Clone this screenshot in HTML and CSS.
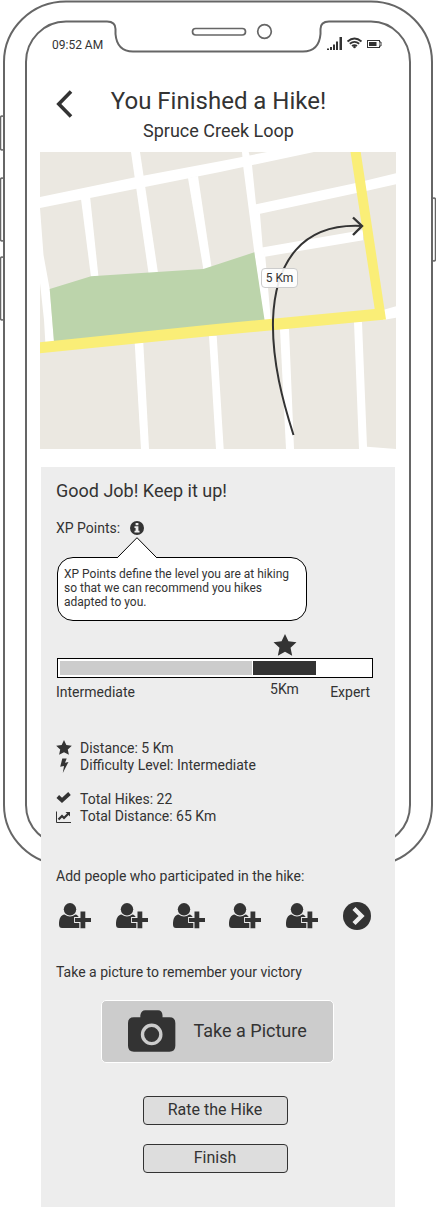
FILE: index.html
```html
<!DOCTYPE html>
<html lang="en">
<head>
<meta charset="utf-8">
<meta name="viewport" content="width=device-width, initial-scale=1">
<title>You Finished a Hike!</title>
<link rel="stylesheet" href="styles.css">
</head>
<body>
<svg class="defs" width="0" height="0" aria-hidden="true">
  <symbol id="star" viewBox="0 0 24 23"><path d="M12 0l3.600 7.700 8.400 1-6.200 5.700 1.700 8.300L12 18.600l-7.500 4.100 1.700-8.300L0 8.700l8.400-1z"/></symbol>
  <symbol id="add-user" viewBox="0 0 32 28">
    <path d="M0 22.500C0 16.500 1.800 12.800 5.500 12.400Q11 16.400 16.500 12.400C19.500 13 20.500 16 20.500 20V26H3Q0 26 0 22.500z"/>
    <circle cx="11" cy="7.300" r="6.200"/>
    <path d="M21.500 9.500h4.800v6.500h5.700v4h-5.700v6.200h-4.800v-6.200h-5.500v-4h5.500z" stroke="#ededed" stroke-width="1.800" paint-order="stroke"/>
  </symbol>
</svg>
<div class="phone">
  <svg class="frame" viewBox="0 0 436 868" preserveAspectRatio="none" aria-hidden="true">
    <g fill="none" stroke="#666" stroke-width="2">
      <path d="M4 118Q4 116 2 116Q0.500 116 0.500 118V148Q0.500 150 2 150Q4 150 4 148M4 180Q4 178 2 178Q0.500 178 0.500 180V239Q0.500 241 2 241Q4 241 4 239M4 259Q4 257 2 257Q0.500 257 0.500 259V318Q0.500 320 2 320Q4 320 4 318M432 200Q432 198 434 198Q435.500 198 435.500 200V259Q435.500 261 434 261Q432 261 432 259" stroke-width="1.500"/>
      <path d="M66 1.500H371A61 60.500 0 0 1 432 62V805A61 60 0 0 1 371 865H66A62 60 0 0 1 4 805V62A62 60.500 0 0 1 66 1.500z"/>
      <path d="M66 21.500H107Q115.500 21.500 115.500 29V34Q117 51.500 133 51.500H303Q319 51.500 320.500 34V29Q320.500 21.500 329 21.500H371A39 40.500 0 0 1 410 62V805A39 40 0 0 1 371 845H66A40 40 0 0 1 26 805V62A40 40.500 0 0 1 66 21.500z"/>
      <rect x="192.500" y="28.500" width="53" height="6.500" rx="3.200" stroke-width="1.700"/>
      <circle cx="264.500" cy="31.500" r="6.800" stroke-width="1.700"/>
    </g>
  </svg>
  <div class="status">
    <span>09:52 AM</span>
    <svg width="56" height="14" viewBox="0 0 56 14" fill="#333" aria-hidden="true">
      <path d="M1 10.500h2v1.500H1zM4 9h2v3H4zM7 6.500h2V12H7zM10 3.500h2V12h-2zM13.500-1h2.500v13h-2.500z"/>
      <g fill="none" stroke="#333" stroke-width="1.800"><path d="M21.500 3.500Q28.500-2.500 35.500 3.500M23.800 5.800Q28.500 2 33.200 5.800M26 8Q28.500 6.200 31 8"/></g><circle cx="28.500" cy="9" r="1.300"/>
      <rect x="41.500" y="2.500" width="12" height="7" fill="none" stroke="#333"/><path d="M43 4h7.500v4H43z"/><path d="M53.500 4h1.500v4h-1.500" fill="#fff" stroke="#333"/>
    </svg>
  </div>
  <header class="header">
    <button class="back" type="button" aria-label="Back"><svg width="18" height="28" viewBox="0 0 18 28" fill="none" stroke="#333" stroke-width="3.600"><path d="M15 1.500L2.800 14 15 26.500"/></svg></button>
    <div class="heading"><h1>You Finished a Hike!</h1><p>Spruce Creek Loop</p></div>
  </header>
  <section class="map" aria-label="Route map">
    <svg viewBox="0 0 356 297" aria-hidden="true">
      <path fill="#ebe8e1" d="M0 0H356V297H0z"/>
      <g fill="#fff">
        <path d="M0 45L94 25.500 103 23.700 180 9.300 227 0H274L180 20 0 56z"/>
        <path d="M91 0H100L118 121H108.500z"/>
        <path d="M41 47L50 44 58.500 125H51z"/>
        <path d="M148 26L158 24 171.500 115 163.500 118z"/>
        <path d="M0 56L3.500 103 9.700 137 14 190H5.300L4 168 0 131z"/>
        <path d="M202 0H208.700L212 13 216 52.300 220 62 222.700 95.300 225.300 104.700 231 170H224L214.300 100.300 203.300 15.300z"/>
        <path d="M215 52.500L314.700 31.300 356 21.300V32.300L326 39 219 62z"/>
        <path d="M222 95.500L323 78V88.300L225 104.700z"/>
        <path d="M343 158L356 154.300V165.700L343 168z"/>
        <path d="M94.700 191H103.300L109 297H101z"/>
        <path d="M169 184H176.700L183.700 297H176z"/>
        <path d="M240 177H249L254 297H246z"/>
        <path d="M314 170H322L327 294.700 356 297H319z"/>
      </g>
      <path fill="#bcd4ab" d="M9.700 137L51 124.300 163.300 117 214.300 100.300 224.700 169 14 190z"/>
      <path fill="#faee77" d="M310.500 0H320.700L346 167.500 176 183.500 0 201.300V190.300L176 172 334.700 157z"/>
      <g fill="none" stroke="#333" stroke-width="2"><path d="M253.500 283C243 250 232 210 233 168C235 110 262 71 322 74"/><path d="M313 65.500L322 74 313 83" stroke-width="2.400"/></g>
    </svg>
    <span class="distance">5 Km</span>
  </section>
  <main class="panel">
    <h2>Good Job! Keep it up!</h2>
    <div class="xp-title"><span>XP Points:</span>
      <button type="button" aria-label="About XP Points" aria-describedby="xp-help"><svg width="14" height="14" viewBox="0 0 14 14"><circle cx="7" cy="7" r="7" fill="#333"/><path fill="#ededed" d="M5.600 2h2.800v2.200H5.600zM4.500 5.300h3.900v4.500h1.100v1.700h-5V9.800h1.100V7h-1.100z"/></svg></button>
    </div>
    <div class="bubble" id="xp-help" role="tooltip">
      <svg class="pointer" width="40" height="21" viewBox="0 0 40 21" aria-hidden="true"><path d="M0.500 20.500L20 0.700 39.500 20.500" fill="#fff" stroke="#000"/><path d="M1 20.500H39" stroke="#fff"/></svg>
      XP Points define the level you are at hiking so that we can recommend you hikes adapted to you.
    </div>
    <div class="level">
      <svg class="marker" width="24" height="22" fill="#333" aria-hidden="true"><use href="#star"/></svg>
      <div class="bar" role="img" aria-label="XP level with 5 Km added"><span class="earned"></span><span class="gained"></span></div>
      <span class="from">Intermediate</span><span class="gain">5Km</span><span class="to">Expert</span>
    </div>
    <ul class="stats">
      <li><svg width="16" height="15" fill="#333" aria-hidden="true"><use href="#star"/></svg>Distance: 5 Km</li>
      <li><svg width="16" height="16" viewBox="0 0 16 16" fill="#333" aria-hidden="true"><path d="M6.300 1.500h4.400L9 5.700l3.500-.8L6.800 16 8 9 4.200 9.800z"/></svg>Difficulty Level: Intermediate</li>
    </ul>
    <ul class="stats totals">
      <li><svg width="16" height="16" viewBox="0 0 16 16" fill="none" stroke="#333" stroke-width="3.800" aria-hidden="true"><path d="M1.800 5.500L6 9.500 13.500 2.500"/></svg>Total Hikes: 22</li>
      <li><svg width="16" height="16" viewBox="0 0 16 16" fill="none" stroke="#333" aria-hidden="true"><path d="M0.500 3.500V14.500H15"/><path d="M2.500 11.500L6 8l2 2 4.500-4.500" stroke-width="2.200"/><path d="M9.500 4H14V8.500z" fill="#333" stroke="none"/></svg>Total Distance: 65 Km</li>
    </ul>
    <p class="prompt">Add people who participated in the hike:</p>
    <div class="people">
      <button type="button" aria-label="Add person 1"><svg width="32" height="28" fill="#333"><use href="#add-user"/></svg></button>
      <button type="button" aria-label="Add person 2"><svg width="32" height="28" fill="#333"><use href="#add-user"/></svg></button>
      <button type="button" aria-label="Add person 3"><svg width="32" height="28" fill="#333"><use href="#add-user"/></svg></button>
      <button type="button" aria-label="Add person 4"><svg width="32" height="28" fill="#333"><use href="#add-user"/></svg></button>
      <button type="button" aria-label="Add person 5"><svg width="32" height="28" fill="#333"><use href="#add-user"/></svg></button>
      <button type="button" aria-label="More people"><svg width="28" height="28" viewBox="0 0 28 28"><circle cx="14" cy="14" r="14" fill="#333"/><path d="M11 6.500L18.500 14 11 21.500" fill="none" stroke="#ededed" stroke-width="4.400"/></svg></button>
    </div>
    <p class="prompt photo-prompt">Take a picture to remember your victory</p>
    <button class="photo" type="button"><svg width="48" height="42" viewBox="0 0 48 42" aria-hidden="true"><path fill="#333" d="M6 7H12.500V5Q13.500 0 17.500 0H30.500Q34.500 0 35 5V7H42Q48 7 48 13V36Q48 42 42 42H6Q0 42 0 36V13Q0 7 6 7z"/><circle cx="24" cy="24.500" r="9.300" fill="#333" stroke="#ccc" stroke-width="3.400"/></svg>Take a Picture</button>
    <div class="actions"><button type="button">Rate the Hike</button><button type="button">Finish</button></div>
  </main>
</div>
</body>
</html>
```
FILE: styles.css
```css
* { box-sizing: border-box; }
body { margin: 0; background: #fff; color: #333; font: 14px/20px Roboto, "Liberation Sans", sans-serif; }
h1, h2, p, ul { margin: 0; padding: 0; font-weight: 400; }
ul { list-style: none; }
svg { display: block; }
button { margin: 0; padding: 0; border: 0; background: none; color: inherit; font: inherit; cursor: pointer; }
.defs { position: absolute; }

.phone { position: relative; max-width: 436px; margin: 0 auto; }
.frame { position: absolute; top: 0; left: 0; z-index: -1; width: 100%; height: 868px; }

.status { display: flex; justify-content: space-between; padding: 38px 54px 0 52px; font-size: 12px; line-height: 14px; }
.status svg { overflow: visible; }

.header { display: grid; grid-template-columns: 24px 1fr 24px; padding: 35px 55px 10px 56px; }
.back { align-self: start; margin-top: 3px; }
.heading { display: grid; gap: 5px; text-align: center; }
.heading h1 { font-size: 24px; line-height: 28px; }
.heading p { font-size: 18px; line-height: 22px; }

.map { position: relative; margin: 0 40px; }
.map svg { width: 100%; }
.distance { position: absolute; left: 62%; top: 39%; padding: 2px 4px; border: 1px solid #ccc; border-radius: 4px; background: rgba(255, 255, 255, 0.9); font-size: 12px; line-height: 14px; }

.panel { margin: 18px 41px 0; padding: 13px 16px 34px 15px; background: #ededed; }
.panel h2 { font-size: 18px; line-height: 22px; }
.xp-title { display: flex; align-items: center; gap: 10px; margin-top: 16px; }

.bubble { position: relative; max-width: 250px; margin: 19px 0 0 1px; padding: 9px 6px 11px; border: 1px solid #000; border-radius: 16px; background: #fff; font-size: 12px; line-height: 14px; }
.pointer { position: absolute; left: 59px; bottom: 100%; }

.level { display: grid; grid-template-columns: 196fr 63fr 57fr; margin: 13px 6px 0 1px; }
.marker { grid-column: 2; justify-self: center; }
.bar { display: grid; grid-template-columns: subgrid; grid-column: 1 / -1; height: 20px; margin: 2px 0 1px; padding: 2px 0; border: 1px solid #000; background: #fff; }
.earned { margin: 0 1px 0 2px; background: #ccc; }
.gained { background: #333; }
.from { padding-top: 3px; margin-left: -1px; }
.gain { text-align: center; }
.to { padding: 3px 3px 0 0; text-align: right; }

.stats { margin-top: 38px; line-height: 17px; }
.totals { margin-top: 17px; }
.stats li { display: flex; gap: 8px; }

.prompt { margin-top: 41px; }
.people { display: flex; justify-content: space-between; margin: 16px 8px 0 3px; }
.photo-prompt { margin-top: 32px; }

.photo { display: flex; align-items: center; gap: 18px; width: 72%; height: 63px; margin: 18px auto 0; padding: 0 26px 2px; border: 1px solid #fff; border-radius: 5px; background: #ccc; font-size: 18px; white-space: nowrap; }
.actions { display: grid; justify-content: center; grid-template-columns: 145px; gap: 19px; margin: 33px 5px 0 0; }
.actions button { height: 29px; padding-bottom: 2px; border: 1px solid #333; border-radius: 4px; background: #ddd; font-size: 16px; }
```
